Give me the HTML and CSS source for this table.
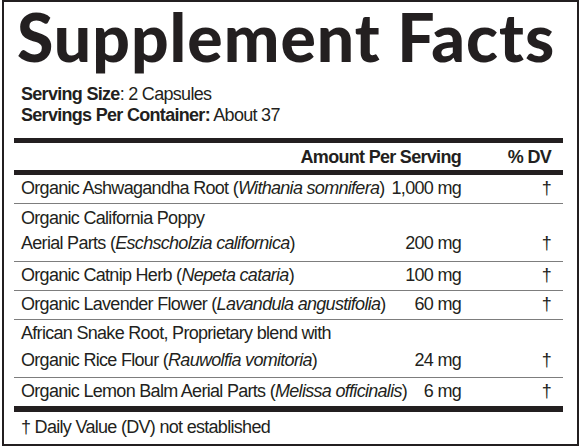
FILE: index.html
```html
<!DOCTYPE html>
<html>
<head lang="en">
	<meta charset="UTF-8">
	<title>Supplement Facts</title>
	<link rel="stylesheet" href="styles.css">
</head>
<body>
	<div class="label">
		<h1>Supplement Facts</h1>
		<div class="serving">
			<p><b>Serving Size</b>: 2 Capsules</p>
			<p><b>Servings Per Container:</b> About 37</p>
		</div>
		<div class="row head">
			<span class="name"></span>
			<span class="amt">Amount Per Serving</span>
			<span class="dv">% DV</span>
		</div>
		<div class="row">
			<span class="name">Organic Ashwagandha Root (<i>Withania somnifera</i>)</span>
			<span class="amt">1,000 mg</span>
			<span class="dv">†</span>
		</div>
		<div class="row double">
			<span class="name">Organic California Poppy<br>Aerial Parts (<i>Eschscholzia californica</i>)</span>
			<span class="amt">200 mg</span>
			<span class="dv">†</span>
		</div>
		<div class="row">
			<span class="name">Organic Catnip Herb (<i>Nepeta cataria</i>)</span>
			<span class="amt">100 mg</span>
			<span class="dv">†</span>
		</div>
		<div class="row">
			<span class="name">Organic Lavender Flower (<i>Lavandula angustifolia</i>)</span>
			<span class="amt">60 mg</span>
			<span class="dv">†</span>
		</div>
		<div class="row double wide">
			<span class="name">African Snake Root, Proprietary blend with<br>Organic Rice Flour (<i>Rauwolfia vomitoria</i>)</span>
			<span class="amt">24 mg</span>
			<span class="dv">†</span>
		</div>
		<div class="row last">
			<span class="name">Organic Lemon Balm Aerial Parts (<i>Melissa officinalis</i>)</span>
			<span class="amt">6 mg</span>
			<span class="dv">†</span>
		</div>
		<p class="foot">† Daily Value (DV) not established</p>
	</div>
</body>
</html>
```

FILE: styles.css
```css
*{
	margin:0;
	padding:0;
	box-sizing:border-box;
}
body{
	background:#fff;
	color:#231f20;
	font-family:"Liberation Sans",Arial,sans-serif;
	font-size:18px;
	letter-spacing:-0.7px;
}
.label{
	width:577px;
	height:446px;
	margin-left:2px;
	border:2px solid #231f20;
	padding:0 14px 0 10px;
}
h1{
	font-family:Lato,sans-serif;
	font-weight:900;
	font-size:66px;
	letter-spacing:1px;
	line-height:80px;
	margin-top:-5px;
	padding:0 0 3px 3px;
	white-space:nowrap;
}
.serving{
	padding:4px 0 12px 7px;
	line-height:21px;
	border-bottom:5px solid #231f20;
}
.row{
	display:flex;
	align-items:flex-end;
	height:29px;
	line-height:25px;
	padding:0 0 2px 7px;
	border-bottom:1px solid #7d7d7d;
	white-space:nowrap;
}
.row.double{
	height:58px;
	padding-bottom:5px;
}
.row.wide{
	line-height:27px;
	padding-bottom:3px;
}
.row.head{
	height:32px;
	padding-bottom:0;
	font-weight:bold;
	border-bottom:5px solid #231f20;
}
.row.last{
	height:34px;
	border-bottom:6px solid #231f20;
}
.name{
	flex:1;
}
.amt{
	text-align:right;
	padding-left:4px;
}
.dv{
	width:102px;
	text-align:right;
	padding-right:12px;
}
.foot{
	padding:3px 0 0 7px;
	line-height:25px;
}
```
